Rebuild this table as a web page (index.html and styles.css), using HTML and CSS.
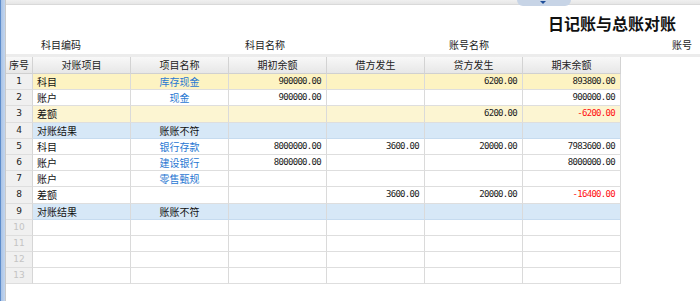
FILE: index.html
```html
<!DOCTYPE html>
<html lang="zh-CN">
<head>
<meta charset="utf-8">
<title>日记账与总账对账</title>
<link rel="stylesheet" href="styles.css">
</head>
<body>
<div class="app">
  <div class="strip"></div>
  <div class="main">
    <div class="topbar"><div class="tab"><span class="arrow"></span></div></div>
    <div class="title">日记账与总账对账</div>
    <div class="labels">
      <span class="lbl">科目编码</span>
      <span class="lbl">科目名称</span>
      <span class="lbl">账号名称</span>
      <span class="lbl last">账号</span>
    </div>
    <div class="tablewrap">
      <div class="grid">
        <div class="hd">序号</div><div class="hd">对账项目</div><div class="hd">项目名称</div><div class="hd">期初余额</div><div class="hd">借方发生</div><div class="hd">贷方发生</div><div class="hd">期末余额</div>

        <div class="seq">1</div><div class="c y1 l">科目</div><div class="c y1 ct link">库存现金</div><div class="c y1 n">900000.00</div><div class="c y1 n"></div><div class="c y1 n">6200.00</div><div class="c y1 n">893800.00</div>
        <div class="seq">2</div><div class="c l">账户</div><div class="c ct link">现金</div><div class="c n">900000.00</div><div class="c n"></div><div class="c n"></div><div class="c n">900000.00</div>
        <div class="seq">3</div><div class="c y2 l">差额</div><div class="c y2 ct"></div><div class="c y2 n"></div><div class="c y2 n"></div><div class="c y2 n">6200.00</div><div class="c y2 n red">-6200.00</div>
        <div class="seq">4</div><div class="c b l">对账结果</div><div class="c b ct">账账不符</div><div class="c b n"></div><div class="c b n"></div><div class="c b n"></div><div class="c b n"></div>
        <div class="seq">5</div><div class="c l">科目</div><div class="c ct link">银行存款</div><div class="c n">8000000.00</div><div class="c n">3600.00</div><div class="c n">20000.00</div><div class="c n">7983600.00</div>
        <div class="seq">6</div><div class="c l">账户</div><div class="c ct link">建设银行</div><div class="c n">8000000.00</div><div class="c n"></div><div class="c n"></div><div class="c n">8000000.00</div>
        <div class="seq">7</div><div class="c l">账户</div><div class="c ct link">零售甄规</div><div class="c n"></div><div class="c n"></div><div class="c n"></div><div class="c n"></div>
        <div class="seq">8</div><div class="c l">差额</div><div class="c ct"></div><div class="c n"></div><div class="c n">3600.00</div><div class="c n">20000.00</div><div class="c n red">-16400.00</div>
        <div class="seq">9</div><div class="c b l">对账结果</div><div class="c b ct">账账不符</div><div class="c b n"></div><div class="c b n"></div><div class="c b n"></div><div class="c b n"></div>
        <div class="seq empty">10</div><div class="c"></div><div class="c"></div><div class="c"></div><div class="c"></div><div class="c"></div><div class="c"></div>
        <div class="seq empty">11</div><div class="c"></div><div class="c"></div><div class="c"></div><div class="c"></div><div class="c"></div><div class="c"></div>
        <div class="seq empty">12</div><div class="c"></div><div class="c"></div><div class="c"></div><div class="c"></div><div class="c"></div><div class="c"></div>
        <div class="seq empty">13</div><div class="c"></div><div class="c"></div><div class="c"></div><div class="c"></div><div class="c"></div><div class="c"></div>
      </div>
    </div>
  </div>
</div>
</body>
</html>
```
FILE: styles.css
```css
* { box-sizing: border-box; }
html, body { margin: 0; padding: 0; background: #fff; }
body {
  font-family: "Noto Sans CJK SC", "Liberation Sans", sans-serif;
  font-size: 10px;
  color: #111;
  width: 700px;
  height: 301px;
  overflow: hidden;
}
.app { display: flex; height: 301px; }
.strip {
  width: 5px;
  flex: none;
  background: linear-gradient(to right, #5d8ccb 0, #5d8ccb 1px, #a9c3e6 1px, #c3d6ef 5px);
}
.main {
  flex: 1;
  border-left: 1px solid #c9c9c9;
  display: flex;
  flex-direction: column;
}
.topbar {
  height: 5px;
  background: linear-gradient(#f0f0f0, #e6e6e6);
  border-bottom: 1px solid #d9d9d9;
  position: relative;
}
.tab {
  position: absolute;
  left: 511px;
  top: 0;
  width: 54px;
  height: 6px;
  background: #c7d4e6;
  border-radius: 0 0 6px 6px;
}
.arrow {
  position: absolute;
  left: 23px;
  top: 1px;
  width: 0;
  height: 0;
  border-left: 3px solid transparent;
  border-right: 3px solid transparent;
  border-top: 3px solid #1f4f9a;
}
.title {
  margin-top: 8px;
  height: 20px;
  line-height: 20px;
  text-align: right;
  padding-right: 24px;
  font-size: 16px;
  font-weight: 700;
  color: #111;
}
.labels {
  margin-top: 5px;
  height: 14px;
  line-height: 14px;
  display: flex;
  padding-left: 35px;
  color: #222;
}
.lbl { width: 204px; flex: none; }
.lbl.last { width: auto; padding-left: 19px; }
.tablewrap {
  margin-top: 2px;
  border-top: 3px solid #ececec;
}
.grid {
  display: grid;
  grid-template-columns: 27px repeat(6, 98px);
  grid-template-rows: 17px repeat(13, 16.2px);
  width: 615px;
}
.hd {
  background: linear-gradient(#f8f8f8, #e7e7e7);
  border-right: 1px solid #d3d3d3;
  border-bottom: 1px solid #d0d0d0;
  text-align: center;
  line-height: 16px;
  color: #222;
}
.seq {
  background: #f0f0f0;
  border-right: 1px solid #d6d6d6;
  border-bottom: 1px solid #dedede;
  text-align: center;
  font-family: "DejaVu Sans", sans-serif;
  font-size: 9px;
  line-height: 15px;
  color: #222;
}
.seq.empty { color: #c4c4c4; }
.c {
  border-right: 1px solid #dadada;
  border-bottom: 1px solid #dedede;
  line-height: 15px;
  white-space: nowrap;
  overflow: hidden;
  background: #fff;
}
.c.l { padding-left: 4px; }
.c.ct { text-align: center; }
.c.n {
  text-align: right;
  padding-right: 5px;
  font-family: "DejaVu Sans Mono", monospace;
  font-size: 9px;
  letter-spacing: -0.7px;
  color: #222;
}
.y1 { background: #fdf3c2; }
.y2 { background: #fcf5d2; }
.b { background: #d7e8f7; border-bottom-color: #c6dbef; }
.c.link { color: #2877d2; }
.c.red { color: #ff1010; }
```
